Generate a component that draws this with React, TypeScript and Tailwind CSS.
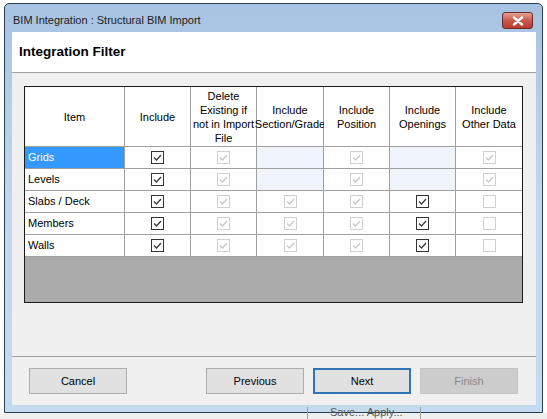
import React from "react";

type Cell =
  | { kind: "check"; checked: boolean; enabled: boolean }
  | { kind: "na" };

type Row = { name: string; selected?: boolean; cells: Cell[] };

const on = (checked = true): Cell => ({ kind: "check", checked, enabled: true });
const off = (checked = true): Cell => ({ kind: "check", checked, enabled: false });
const na: Cell = { kind: "na" };

const rows: Row[] = [
  { name: "Grids", selected: true, cells: [on(), off(), na, off(), na, off()] },
  { name: "Levels", cells: [on(), off(), na, off(), na, off()] },
  { name: "Slabs / Deck", cells: [on(), off(), off(), off(), on(), off(false)] },
  { name: "Members", cells: [on(), off(), off(), off(), on(), off(false)] },
  { name: "Walls", cells: [on(), off(), off(), off(), on(), off(false)] },
];

const headers: string[][] = [
  ["Item"],
  ["Include"],
  ["Delete", "Existing if", "not in Import", "File"],
  ["Include", "Section/Grade"],
  ["Include", "Position"],
  ["Include", "Openings"],
  ["Include", "Other Data"],
];

const CheckBox = ({ checked, enabled }: { checked: boolean; enabled: boolean }) => (
  <div
    className={`w-[13px] h-[13px] border bg-white flex items-center justify-center ${
      enabled ? "border-[#333333]" : "border-[#d0d0d0]"
    }`}
  >
    {checked && (
      <svg width="11" height="11" viewBox="0 0 11 11">
        <path
          d="M2 5.5 L4.5 8 L9 3"
          fill="none"
          stroke={enabled ? "#3a3a3a" : "#c8c8c8"}
          strokeWidth="1.3"
        />
      </svg>
    )}
  </div>
);

const Button = ({
  label,
  variant = "normal",
}: {
  label: string;
  variant?: "normal" | "default" | "disabled";
}) => {
  const cls =
    variant === "default"
      ? "border-2 border-[#2f74b5] bg-[#e1e1e1] text-black"
      : variant === "disabled"
      ? "border border-[#c4c4c4] bg-[#cccccc] text-[#8a8a8a]"
      : "border border-[#adadad] bg-[#e1e1e1] text-black";
  return (
    <div className={`w-[98px] h-[26px] flex items-center justify-center text-[11px] ${cls}`}>
      {label}
    </div>
  );
};

export default function App() {
  return (
    <div
      className="w-[547px] h-[419px] bg-white overflow-hidden flex flex-col"
      style={{ fontFamily: '"Liberation Sans", Arial, sans-serif' }}
    >
      <div className="pl-[4px] pt-[3px]">
        {/* window */}
        <div className="w-[539px] h-[410px] border border-[#2c3e52] rounded-t-[5px] bg-gradient-to-b from-[#a7c3e2] via-[#c3d8ee] to-[#c4daef] flex flex-col">
          {/* title bar */}
          <div className="h-[28px] flex items-start justify-between pl-[8px] pr-[9px]">
            <span className="mt-[10px] text-[11px] leading-[13px] text-[#1c1c1c]">
              BIM Integration : Structural BIM Import
            </span>
            <div className="mt-[8px] w-[31px] h-[17px] rounded-[3px] border border-[#6b2d2a] bg-gradient-to-b from-[#e3a193] via-[#c9584a] to-[#b83c2f] flex items-center justify-center">
              <svg width="12" height="10" viewBox="0 0 12 10">
                <path d="M2 1.5 L10 8.5 M10 1.5 L2 8.5" stroke="#ffffff" strokeWidth="2.4" strokeLinecap="round" />
              </svg>
            </div>
          </div>
          {/* client */}
          <div className="flex flex-1 pl-[7px] pr-[6px]">
            <div className="w-[524px] h-[373px] bg-[#f0f0f0] flex flex-col">
              <div className="h-[40px] bg-white flex items-center pl-[7px]">
                <span className="text-[13.5px] font-bold text-black">Integration Filter</span>
              </div>
              <div className="h-px bg-[#a0a0a0]" />
              {/* table */}
              <div className="mt-[13px] ml-[12px] w-[499px] h-[217px] border border-[#1a1a1a] flex flex-col bg-[#ababab]">
                <div className="grid grid-cols-[99px_65px_65px_66px_65px_65px_66px] gap-px bg-[#a0a0a0] border-b border-[#a0a0a0]">
                  {headers.map((lines, i) => (
                    <div
                      key={i}
                      className="h-[59px] bg-white flex flex-col items-center justify-center text-[11px] leading-[14px] text-black whitespace-nowrap"
                    >
                      {lines.map((l) => (
                        <span key={l}>{l}</span>
                      ))}
                    </div>
                  ))}
                  {rows.map((r) => (
                    <React.Fragment key={r.name}>
                      <div
                        className={`h-[21px] flex items-center pl-[3px] text-[11px] ${
                          r.selected ? "bg-[#3399ff] text-white" : "bg-white text-black"
                        }`}
                      >
                        {r.name}
                      </div>
                      {r.cells.map((c, j) =>
                        c.kind === "na" ? (
                          <div key={j} className="h-[21px] bg-[#eff3fa]" />
                        ) : (
                          <div key={j} className="h-[21px] bg-white flex items-center justify-center">
                            <CheckBox checked={c.checked} enabled={c.enabled} />
                          </div>
                        )
                      )}
                    </React.Fragment>
                  ))}
                </div>
                <div className="flex-1 bg-[#ababab]" />
              </div>
              <div className="mt-[53px] h-px bg-[#a0a0a0]" />
              <div className="mt-[11px] flex items-center pl-[17px] pr-[18px]">
                <Button label="Cancel" />
                <div className="flex-1" />
                <div className="flex gap-[9px]">
                  <Button label="Previous" />
                  <Button label="Next" variant="default" />
                  <Button label="Finish" variant="disabled" />
                </div>
              </div>
            </div>
          </div>
          <div className="h-[7px]" />
        </div>
      </div>
      <div className="flex-1 bg-[#f0f0f0]">
        <div className="ml-[307px] -mt-[6px] w-[114px] h-[12px] border-x border-[#a0a0a0] overflow-hidden pl-[22px] text-[11px] leading-[11px] text-[#555]">
          Save... Apply...
        </div>
      </div>
    </div>
  );
}
